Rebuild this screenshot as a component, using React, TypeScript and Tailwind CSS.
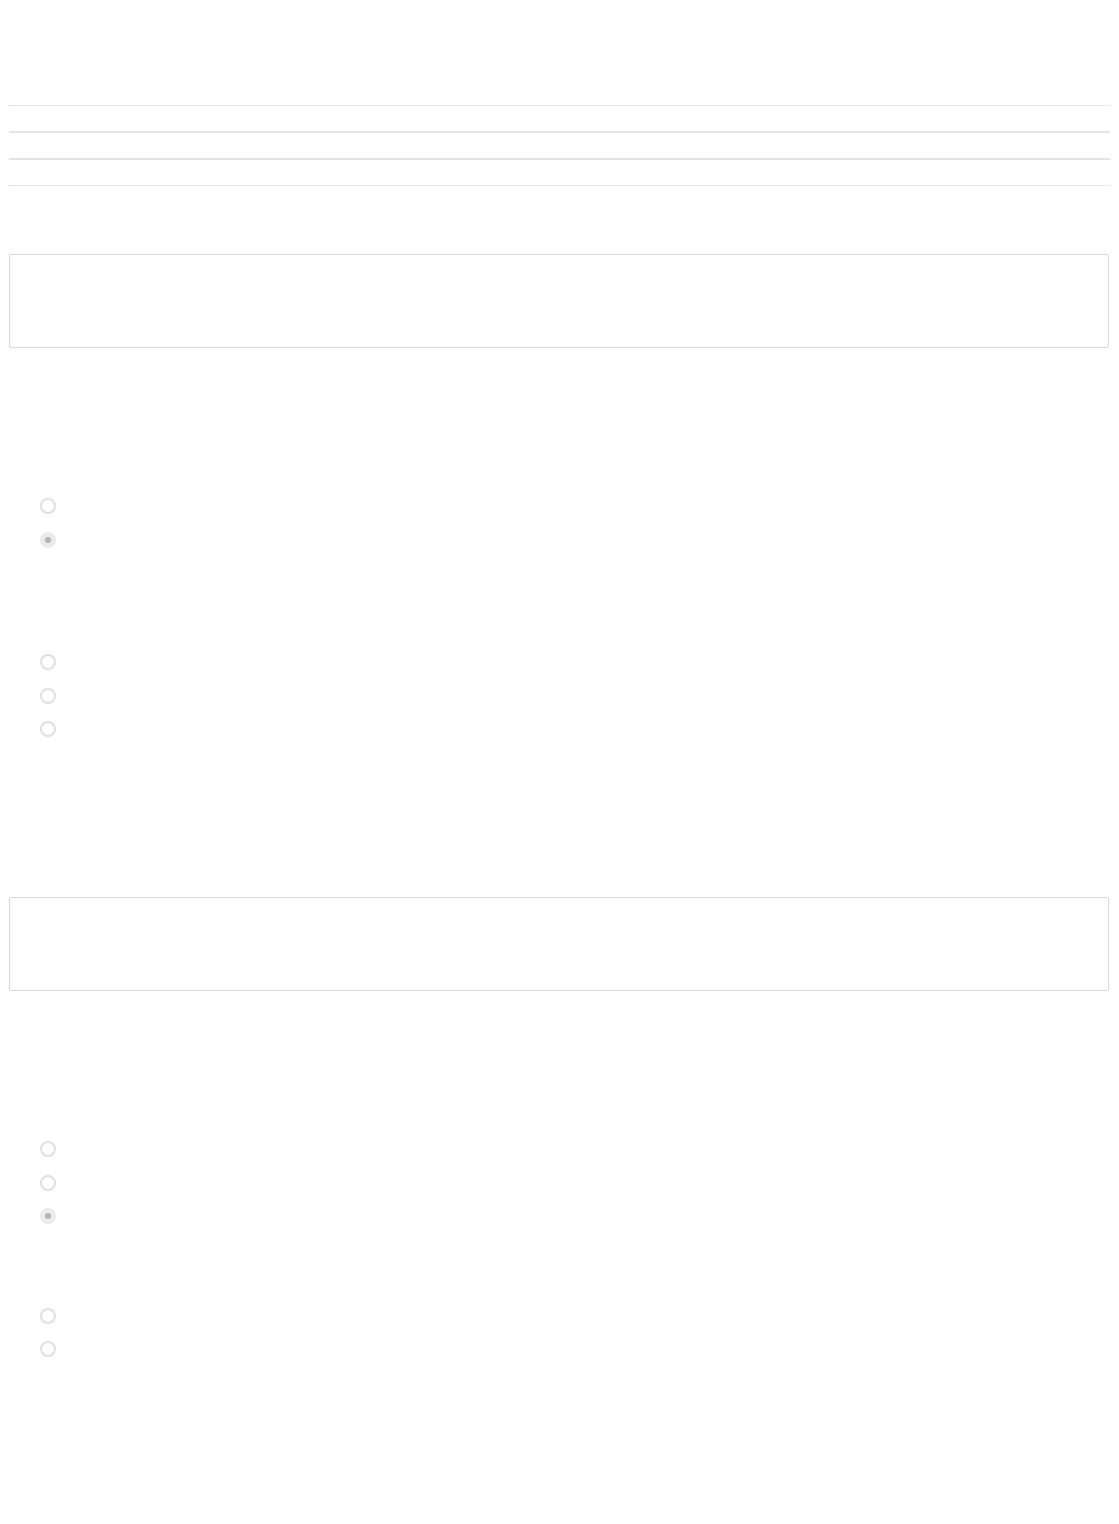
import React from 'react'

function Radio({ checked = false }: { checked?: boolean }) {
  return (
    <div className="flex h-[33.5px] items-center pl-[31px]">
      {checked ? (
        <span className="flex h-4 w-4 items-center justify-center rounded-full bg-[#ebebeb]">
          <span className="h-[6px] w-[6px] rounded-full bg-[#b3b3b3]" />
        </span>
      ) : (
        <span className="h-4 w-4 rounded-full border-2 border-[#e0e0e0] bg-white" />
      )}
    </div>
  )
}

export default function App() {
  return (
    <div className="min-h-screen bg-white px-[9px] pt-[105px] font-['Liberation_Sans',sans-serif]">
      {/* table rows */}
      <div>
        {[0, 1, 2].map((i) => (
          <div key={i} className="h-[27px] border-y border-[#e2e4e7]" />
        ))}
      </div>

      <div className="mt-[68px] mr-px h-[94px] rounded-[2px] border border-[#d6d9dd]" />

      <div className="mt-[141.25px]">
        <Radio />
        <Radio checked />
      </div>

      <div className="mt-[89px]">
        <Radio />
        <Radio />
        <Radio />
      </div>

      <div className="mt-[151.25px] mr-px h-[94px] rounded-[2px] border border-[#d6d9dd]" />

      <div className="mt-[141.25px]">
        <Radio />
        <Radio />
        <Radio checked />
      </div>

      <div className="mt-[66px]">
        <Radio />
        <Radio />
      </div>
    </div>
  )
}
